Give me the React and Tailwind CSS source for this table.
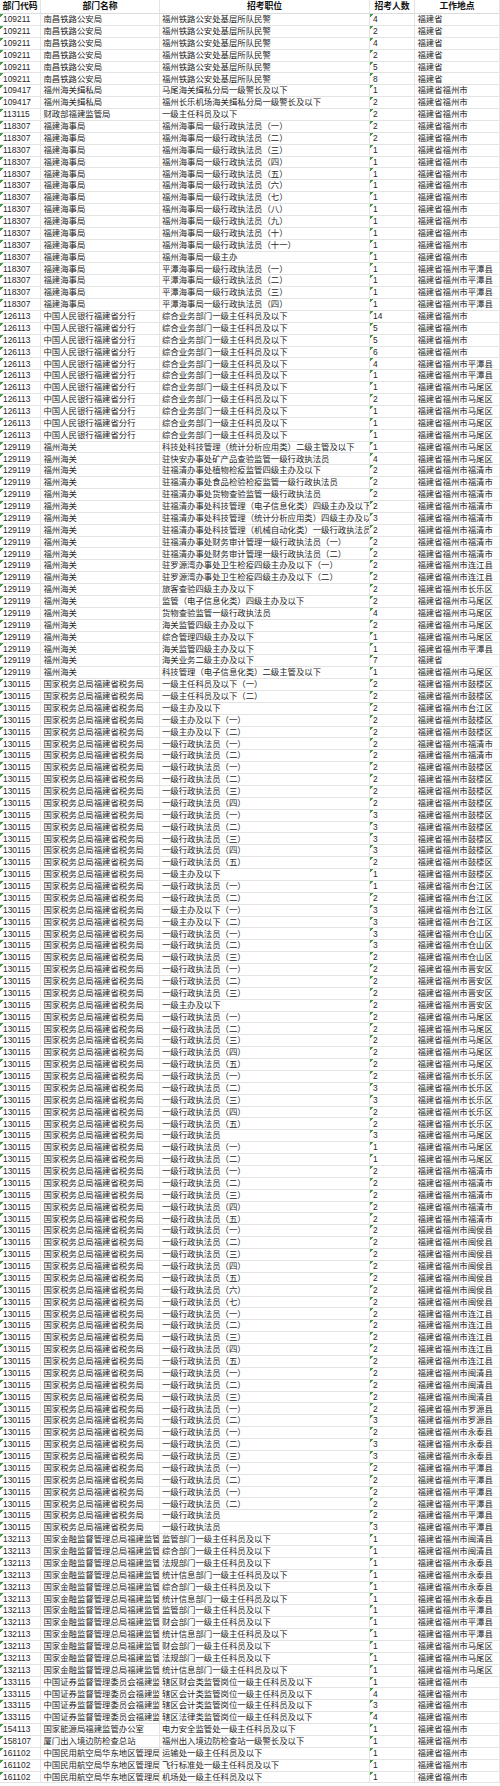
import React from "react";

const F = "福建省福州市";
const data = [];
const add = (code, name, pos, n, loc) => data.push([code, name, pos, String(n), loc]);

[4, 2, 4, 2, 5, 8].forEach((n) => add("109211", "南昌铁路公安局", "福州铁路公安处基层所队民警", n, "福建省"));
add("109417", "福州海关缉私局", "马尾海关缉私分局一级警长及以下", 1, F);
add("109417", "福州海关缉私局", "福州长乐机场海关缉私分局一级警长及以下", 2, F);
add("113115", "财政部福建监管局", "一级主任科员及以下", 2, F);
const nums = ["一", "二", "三", "四", "五", "六", "七", "八", "九", "十", "十一"];
[2, 2, 1, 1, 1, 1, 1, 1, 1, 1, 1].forEach((n, i) =>
  add("118307", "福建海事局", "福州海事局一级行政执法员（" + nums[i] + "）", n, F)
);
add("118307", "福建海事局", "福州海事局一级主办", 1, F);
[0, 1, 2, 3].forEach((i) =>
  add("118307", "福建海事局", "平潭海事局一级行政执法员（" + nums[i] + "）", 1, F + "平潭县")
);
[
  [14, ""], [5, ""], [5, ""], [6, ""], [4, "平潭县"], [1, "平潭县"],
  [1, "马尾区"], [2, "马尾区"], [1, "马尾区"], [1, "马尾区"], [1, "马尾区"],
].forEach(([n, d]) => add("126113", "中国人民银行福建省分行", "综合业务部门一级主任科员及以下", n, F + d));
[
  ["科技处科技管理（统计分析应用类）二级主管及以下", 1, "马尾区"],
  ["驻快安办事处矿产品查验监管一级行政执法员", 4, "马尾区"],
  ["驻福清办事处植物检疫监管四级主办及以下", 2, "福清市"],
  ["驻福清办事处食品检验检疫监管一级行政执法员", 2, "福清市"],
  ["驻福清办事处货物查验监管一级行政执法员", 2, "福清市"],
  ["驻福清办事处科技管理（电子信息化类）四级主办及以下", 2, "福清市"],
  ["驻福清办事处科技管理（统计分析应用类）四级主办及以下", 3, "福清市"],
  ["驻福清办事处科技管理（机械自动化类）一级行政执法员", 2, "福清市"],
  ["驻福清办事处财务审计管理一级行政执法员（一）", 2, "福清市"],
  ["驻福清办事处财务审计管理一级行政执法员（二）", 2, "福清市"],
  ["驻罗源湾办事处卫生检疫四级主办及以下（一）", 2, "连江县"],
  ["驻罗源湾办事处卫生检疫四级主办及以下（二）", 2, "连江县"],
  ["旅客查验四级主办及以下", 2, "长乐区"],
  ["监管（电子信息化类）四级主办及以下", 2, "马尾区"],
  ["货物查验监管一级行政执法员", 4, "马尾区"],
  ["海关监管四级主办及以下", 2, "马尾区"],
  ["综合管理四级主办及以下", 1, "马尾区"],
  ["海关监管四级主办及以下", 1, "平潭县"],
  ["海关业务二级主办及以下", 7, "@"],
  ["科技管理（电子信息化类）二级主管及以下", 1, "马尾区"],
].forEach(([p, n, d]) => add("129119", "福州海关", p, n, d === "@" ? "福建省" : F + d));

const T = "国家税务总局福建省税务局";
const tax = (p, n, d) => add("130115", T, p, n, F + d);
const ex = (idx, counts, d) =>
  idx.forEach((i, k) => tax("一级行政执法员（" + nums[i] + "）", counts[k], d));
tax("一级主任科员及以下（一）", 2, "鼓楼区");
tax("一级主任科员及以下（二）", 2, "鼓楼区");
tax("一级主办及以下", 2, "台江区");
tax("一级主办及以下（一）", 2, "鼓楼区");
tax("一级主办及以下（二）", 2, "鼓楼区");
ex([0, 1], [2, 2], "福清市");
ex([0, 1, 2, 3], [2, 2, 2, 2], "鼓楼区");
ex([0, 1, 2, 3, 4], [3, 3, 3, 3, 2], "鼓楼区");
tax("一级主办及以下", 1, "鼓楼区");
ex([0, 1], [1, 2], "台江区");
tax("一级主办及以下（一）", 3, "台江区");
tax("一级主办及以下（二）", 3, "台江区");
ex([0, 1, 2], [3, 3, 2], "仓山区");
ex([0, 1, 2], [2, 2, 2], "晋安区");
tax("一级主办及以下", 2, "晋安区");
ex([0, 1, 2, 3, 4], [2, 2, 2, 2, 2], "马尾区");
ex([0, 1, 2, 3, 4], [2, 3, 3, 2, 2], "长乐区");
tax("一级行政执法员", 3, "马尾区");
ex([0, 1], [1, 1], "马尾区");
ex([0, 1, 2, 3, 4], [2, 2, 2, 2, 2], "福清市");
ex([0, 1, 2, 3, 4, 5, 6], [2, 2, 2, 2, 2, 2, 2], "闽侯县");
ex([0, 1, 2, 3, 4], [2, 2, 2, 2, 2], "连江县");
ex([0, 1, 2], [2, 2, 2], "闽清县");
ex([0, 1], [2, 3], "罗源县");
ex([0, 1, 2], [2, 3, 3], "永泰县");
ex([0, 1], [2, 2], "平潭县");
ex([0, 1], [2, 2], "平潭县");
tax("一级行政执法员", 2, "平潭县");
tax("一级行政执法员", 3, "平潭县");

const J = "国家金融监督管理总局福建监管局";
[
  ["监管部门一级主任科员及以下", "闽清县"],
  ["综合部门一级主任科员及以下", "闽清县"],
  ["法规部门一级主任科员及以下", "永泰县"],
  ["统计信息部门一级主任科员及以下", "永泰县"],
  ["综合部门一级主任科员及以下", "永泰县"],
  ["统计信息部门一级主任科员及以下", "永泰县"],
  ["监管部门一级主任科员及以下", "平潭县"],
  ["财会部门一级主任科员及以下", "平潭县"],
  ["统计信息部门一级主任科员及以下", "平潭县"],
  ["财会部门一级主任科员及以下", "马尾区"],
  ["法规部门一级主任科员及以下", "马尾区"],
  ["统计信息部门一级主任科员及以下", "马尾区"],
].forEach(([p, d]) => add("132113", J, p, 1, F + d));
const Z = "中国证券监督管理委员会福建监管局";
add("133115", Z, "辖区财会类监管岗位一级主任科员及以下", 1, F);
add("133115", Z, "辖区会计类监管岗位一级主任科员及以下", 4, F);
add("133115", Z, "辖区会计类监管岗位一级主任科员及以下", 3, F);
add("133115", Z, "辖区法律类监管岗位一级主任科员及以下", 4, F);
add("154113", "国家能源局福建监管办公室", "电力安全监管处一级主任科员及以下", 1, F);
add("158107", "厦门出入境边防检查总站", "福州出入境边防检查站一级警长及以下", 1, F);
add("161102", "中国民用航空局华东地区管理局", "运输处一级主任科员及以下", 1, F);
add("161102", "中国民用航空局华东地区管理局", "飞行标准处一级主任科员及以下", 1, F);
add("161102", "中国民用航空局华东地区管理局", "机场处一级主任科员及以下", 1, F);

const cell =
  "h-full flex items-center overflow-hidden whitespace-nowrap border-r border-[#e4e4e4] leading-none";
const tri = "bg-[linear-gradient(135deg,#3f9b3f_2.2px,transparent_2.2px)]";

export default function App() {
  return (
    <div
      className="w-[500px] bg-white text-[#262626] text-[8.4px] overflow-hidden"
      style={{ fontFamily: '"Liberation Sans", "Noto Sans CJK SC", sans-serif' }}
    >
      <div className="grid grid-cols-[41px_119px_210px_45px_85px] h-[14px] border-b border-[#dcdcdc] font-bold text-[8.8px] text-[#111]">
        <div className={cell + " justify-center"}>部门代码</div>
        <div className={cell + " justify-center"}>部门名称</div>
        <div className={cell + " justify-center"}>招考职位</div>
        <div className={cell + " justify-center"}>招考人数</div>
        <div className={cell + " justify-center"}>工作地点</div>
      </div>
      {data.map((r, i) => (
        <div
          key={i}
          className="grid grid-cols-[41px_119px_210px_45px_85px] h-[11.89px] border-b border-[#e4e4e4]"
        >
          <div className={cell + " pl-[3px] " + tri}>{r[0]}</div>
          <div className={cell + " pl-[2.5px]"}>{r[1]}</div>
          <div className={cell + " pl-[2px]"}>{r[2]}</div>
          <div className={cell + " pl-[3px] " + tri}>{r[3]}</div>
          <div className={cell + " pl-[2.5px]"}>{r[4]}</div>
        </div>
      ))}
    </div>
  );
}
